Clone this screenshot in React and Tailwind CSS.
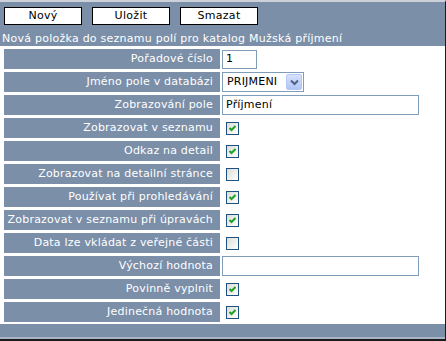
import React from "react";

const Check = ({ checked }) => (
  <div className="ml-[5px] w-[13px] h-[13px] border border-[#1c5180] bg-gradient-to-br from-[#dcdcd7] to-[#ffffff] relative">
    {checked && (
      <svg width="11" height="11" viewBox="0 0 11 11" className="absolute left-0 top-0">
        <path d="M2.5 5 L4.5 7 L8.5 3" fill="none" stroke="#21a121" strokeWidth="2" />
      </svg>
    )}
  </div>
);

const TextInput = ({ w, h = 20, value }) => (
  <div
    className={`ml-[1px] border border-[#7f9db9] bg-white flex items-center pl-[3px] text-[11px] tracking-[0.2px] text-black ${w}`}
    style={{ height: h }}
  >
    {value}
  </div>
);

const Select = () => (
  <div className="ml-[1px] w-[82px] h-[20px] border border-[#7f9db9] bg-white flex items-center justify-between pl-[4px] pr-[1px] text-[11px] tracking-[0.2px] text-black">
    <span>PRIJMENI</span>
    <div className="w-[16px] h-[16px] rounded-[2px] border border-[#b4c8f6] bg-gradient-to-b from-[#d6e1fb] to-[#b1c6f5] flex items-center justify-center">
      <svg width="9" height="7" viewBox="0 0 9 7">
        <path d="M1 1.5 L4.5 5 L8 1.5" fill="none" stroke="#4d6185" strokeWidth="2" />
      </svg>
    </div>
  </div>
);

const rows = [
  ["Pořadové číslo", <TextInput key="a" w="w-[35px]" h={19} value="1" />],
  ["Jméno pole v databázi", <Select key="b" />],
  ["Zobrazování pole", <TextInput key="c" w="w-[197px]" value="Příjmení" />],
  ["Zobrazovat v seznamu", <Check key="d" checked />],
  ["Odkaz na detail", <Check key="e" checked />],
  ["Zobrazovat na detailní stránce", <Check key="f" />],
  ["Používat při prohledávání", <Check key="g" checked />],
  ["Zobrazovat v seznamu při úpravách", <Check key="h" checked />],
  ["Data lze vkládat z veřejné části", <Check key="i" />],
  ["Výchozí hodnota", <TextInput key="j" w="w-[197px]" value="" />],
  ["Povinně vyplnit", <Check key="k" checked />],
  ["Jedinečná hodnota", <Check key="l" checked />],
];

export default function App() {
  return (
    <div className="w-[446px] h-[341px] bg-[#7b8fa9] border-t-2 border-t-[#cdd2da] border-r border-r-[#1a1a1a] border-b-2 border-b-[#1a1a1a] flex flex-col font-['DejaVu_Sans',sans-serif] overflow-hidden">
      <div className="flex gap-[10px] pl-[4px] pt-[5px] h-[23px]">
        {["Nový", "Uložit", "Smazat"].map((t) => (
          <div
            key={t}
            className="w-[78px] h-[18px] bg-white border border-black text-black text-[11px] tracking-[0.3px] flex items-center justify-center"
          >
            {t}
          </div>
        ))}
      </div>
      <div className="h-[21px] pt-[7px] pl-[2px] text-white text-[11px] tracking-[0.25px] leading-[14px] whitespace-nowrap">
        Nová položka do seznamu polí pro katalog Mužská příjmení
      </div>
      <div className="bg-white pl-[4px] pt-[3px] pb-[2px] flex flex-col gap-[3px]">
        {rows.map(([label, ctrl]) => (
          <div key={label} className="flex h-[20px] items-center">
            <div className="w-[216px] h-[20px] bg-[#7b8fa9] text-white text-[11px] tracking-[0.2px] flex items-center justify-end pr-[7px] whitespace-nowrap">
              {label}
            </div>
            <div className="w-[1px]" />
            {ctrl}
          </div>
        ))}
      </div>
      <div className="flex-1" />
      <div className="h-[2px] bg-[#a9b5c6]" />
    </div>
  );
}
